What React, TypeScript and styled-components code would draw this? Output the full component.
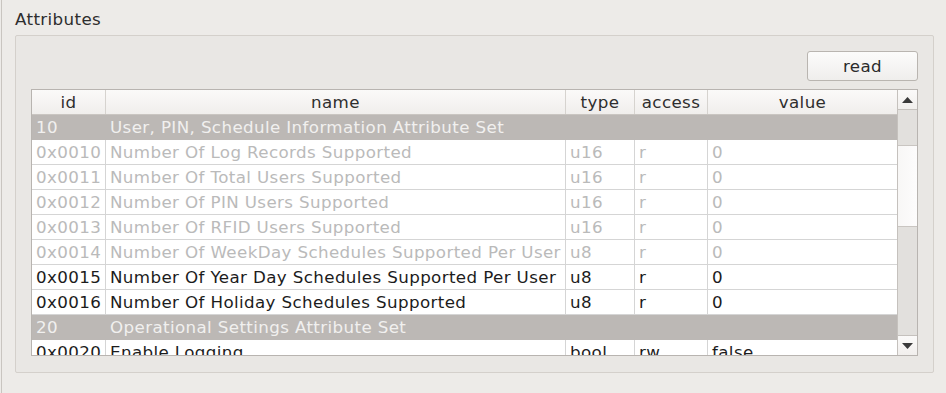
import React from "react";
import styled, { createGlobalStyle } from "styled-components";

const GlobalStyle = createGlobalStyle`
  html, body {
    margin: 0;
    padding: 0;
    background: #edebe8;
  }
  body {
    font-family: "DejaVu Sans", "Liberation Sans", sans-serif;
    font-size: 16.7px;
    letter-spacing: 0.38px;
    color: #2b2b2b;
  }
`;

const COLUMNS = "74px 460px 69px 73px 1fr";

// Fond de la fenêtre, avec le trait gris à gauche
const Page = styled.div`
  box-sizing: border-box;
  height: 393px;
  margin-left: 1px;
  border-left: 1px solid #c9c5c0;
  padding: 9px 12px 21px 12px;
  display: flex;
  flex-direction: column;
`;

const Title = styled.div`
  height: 20px;
  line-height: 20px;
  padding-left: 1px;
  margin-bottom: 6px;
  color: #2e2e2e;
`;

const GroupBox = styled.div`
  flex: 1;
  box-sizing: border-box;
  margin-left: 1px;
  border: 1px solid #d4d0cb;
  border-radius: 2px;
  background: #e9e7e4;
  padding: 15px 15px 16px 15px;
  display: flex;
  flex-direction: column;
  gap: 8px;
`;

const Toolbar = styled.div`
  display: flex;
  justify-content: flex-end;
`;

const Button = styled.button`
  box-sizing: border-box;
  width: 111px;
  height: 30px;
  border: 1px solid #b9b5b0;
  border-radius: 3px;
  background: linear-gradient(#fcfcfb, #efeeec);
  font-family: inherit;
  font-size: 16.7px;
  letter-spacing: 0.38px;
  color: #2b2b2b;
  padding: 0;
`;

const Table = styled.div`
  box-sizing: border-box;
  height: 267px;
  border: 1px solid #b8b4b0;
  background: #ffffff;
  display: flex;
`;

const DataArea = styled.div`
  width: 865px;
  display: flex;
  flex-direction: column;
`;

const HeaderRow = styled.div`
  display: grid;
  grid-template-columns: ${COLUMNS};
  height: 25px;
  box-sizing: border-box;
  border-bottom: 1px solid #c9c5c1;
  background: linear-gradient(#fbfaf9, #f0eeec);
`;

const HeaderCell = styled.div`
  border-right: 1px solid #d6d3cf;
  text-align: center;
  line-height: 24px;
  color: #2e2e2e;
  &:last-child {
    border-right: none;
  }
`;

const Body = styled.div`
  flex: 1;
  overflow: hidden;
`;

const Row = styled.div<{ $group?: boolean; $disabled?: boolean }>`
  display: grid;
  grid-template-columns: ${COLUMNS};
  height: 25px;
  box-sizing: border-box;
  border-bottom: 1px solid ${(p) => (p.$group ? "#bcb8b5" : "#d5d5d5")};
  background: ${(p) => (p.$group ? "#bcb8b5" : "#ffffff")};
  color: ${(p) => (p.$group ? "#f1f0ef" : p.$disabled ? "#bababa" : "#1c1c1c")};
`;

const Cell = styled.div<{ $span?: number; $group?: boolean }>`
  grid-column: span ${(p) => p.$span ?? 1};
  padding-left: 4px;
  line-height: 24px;
  white-space: nowrap;
  overflow: hidden;
  border-right: 1px solid ${(p) => (p.$group ? "transparent" : "#d5d5d5")};
  &:last-child {
    border-right: none;
  }
`;

const ScrollBar = styled.div`
  width: 20px;
  box-sizing: border-box;
  border-left: 1px solid #c5c1bd;
  background: #e2e0dd;
  display: flex;
  flex-direction: column;
`;

const ArrowButton = styled.div<{ $down?: boolean }>`
  height: 20px;
  box-sizing: border-box;
  background: linear-gradient(#fbfaf9, #f1efed);
  border-top: ${(p) => (p.$down ? "1px solid #c5c1bd" : "none")};
  border-bottom: ${(p) => (p.$down ? "none" : "1px solid #c5c1bd")};
  display: flex;
  align-items: center;
  justify-content: center;
`;

const Track = styled.div`
  flex: 1;
  display: flex;
  flex-direction: column;
`;

const Handle = styled.div`
  margin-top: 35px;
  height: 82px;
  box-sizing: border-box;
  border-top: 1px solid #c9c5c1;
  border-bottom: 1px solid #c9c5c1;
  background: linear-gradient(90deg, #f8f7f6, #fdfcfc);
`;

type Attr = {
  id: string;
  name: string;
  type?: string;
  access?: string;
  value?: string;
  group?: boolean;
  disabled?: boolean;
};

const rows: Attr[] = [
  { id: "10", name: "User, PIN, Schedule Information Attribute Set", group: true },
  { id: "0x0010", name: "Number Of Log Records Supported", type: "u16", access: "r", value: "0", disabled: true },
  { id: "0x0011", name: "Number Of Total Users Supported", type: "u16", access: "r", value: "0", disabled: true },
  { id: "0x0012", name: "Number Of PIN Users Supported", type: "u16", access: "r", value: "0", disabled: true },
  { id: "0x0013", name: "Number Of RFID Users Supported", type: "u16", access: "r", value: "0", disabled: true },
  { id: "0x0014", name: "Number Of WeekDay Schedules Supported Per User", type: "u8", access: "r", value: "0", disabled: true },
  { id: "0x0015", name: "Number Of Year Day Schedules Supported Per User", type: "u8", access: "r", value: "0" },
  { id: "0x0016", name: "Number Of Holiday Schedules Supported", type: "u8", access: "r", value: "0" },
  { id: "20", name: "Operational Settings Attribute Set", group: true },
  { id: "0x0020", name: "Enable Logging", type: "bool", access: "rw", value: "false" },
];

const Arrow = ({ down }: { down?: boolean }) => (
  <svg width="11" height="6" viewBox="0 0 11 6">
    <path d={down ? "M0 0 L11 0 L5.5 6 Z" : "M0 6 L11 6 L5.5 0 Z"} fill="#3a3a3a" />
  </svg>
);

export default function App() {
  return (
    <>
      <GlobalStyle />
      <Page>
        <Title>Attributes</Title>
        <GroupBox>
          <Toolbar>
            <Button>read</Button>
          </Toolbar>
          <Table>
            <DataArea>
              <HeaderRow>
                <HeaderCell>id</HeaderCell>
                <HeaderCell>name</HeaderCell>
                <HeaderCell>type</HeaderCell>
                <HeaderCell>access</HeaderCell>
                <HeaderCell>value</HeaderCell>
              </HeaderRow>
              <Body>
                {rows.map((r) =>
                  r.group ? (
                    <Row key={r.id} $group>
                      <Cell $group>{r.id}</Cell>
                      <Cell $group $span={4}>{r.name}</Cell>
                    </Row>
                  ) : (
                    <Row key={r.id} $disabled={r.disabled}>
                      <Cell>{r.id}</Cell>
                      <Cell>{r.name}</Cell>
                      <Cell>{r.type}</Cell>
                      <Cell>{r.access}</Cell>
                      <Cell>{r.value}</Cell>
                    </Row>
                  )
                )}
              </Body>
            </DataArea>
            <ScrollBar>
              <ArrowButton>
                <Arrow />
              </ArrowButton>
              <Track>
                <Handle />
              </Track>
              <ArrowButton $down>
                <Arrow down />
              </ArrowButton>
            </ScrollBar>
          </Table>
        </GroupBox>
      </Page>
    </>
  );
}
